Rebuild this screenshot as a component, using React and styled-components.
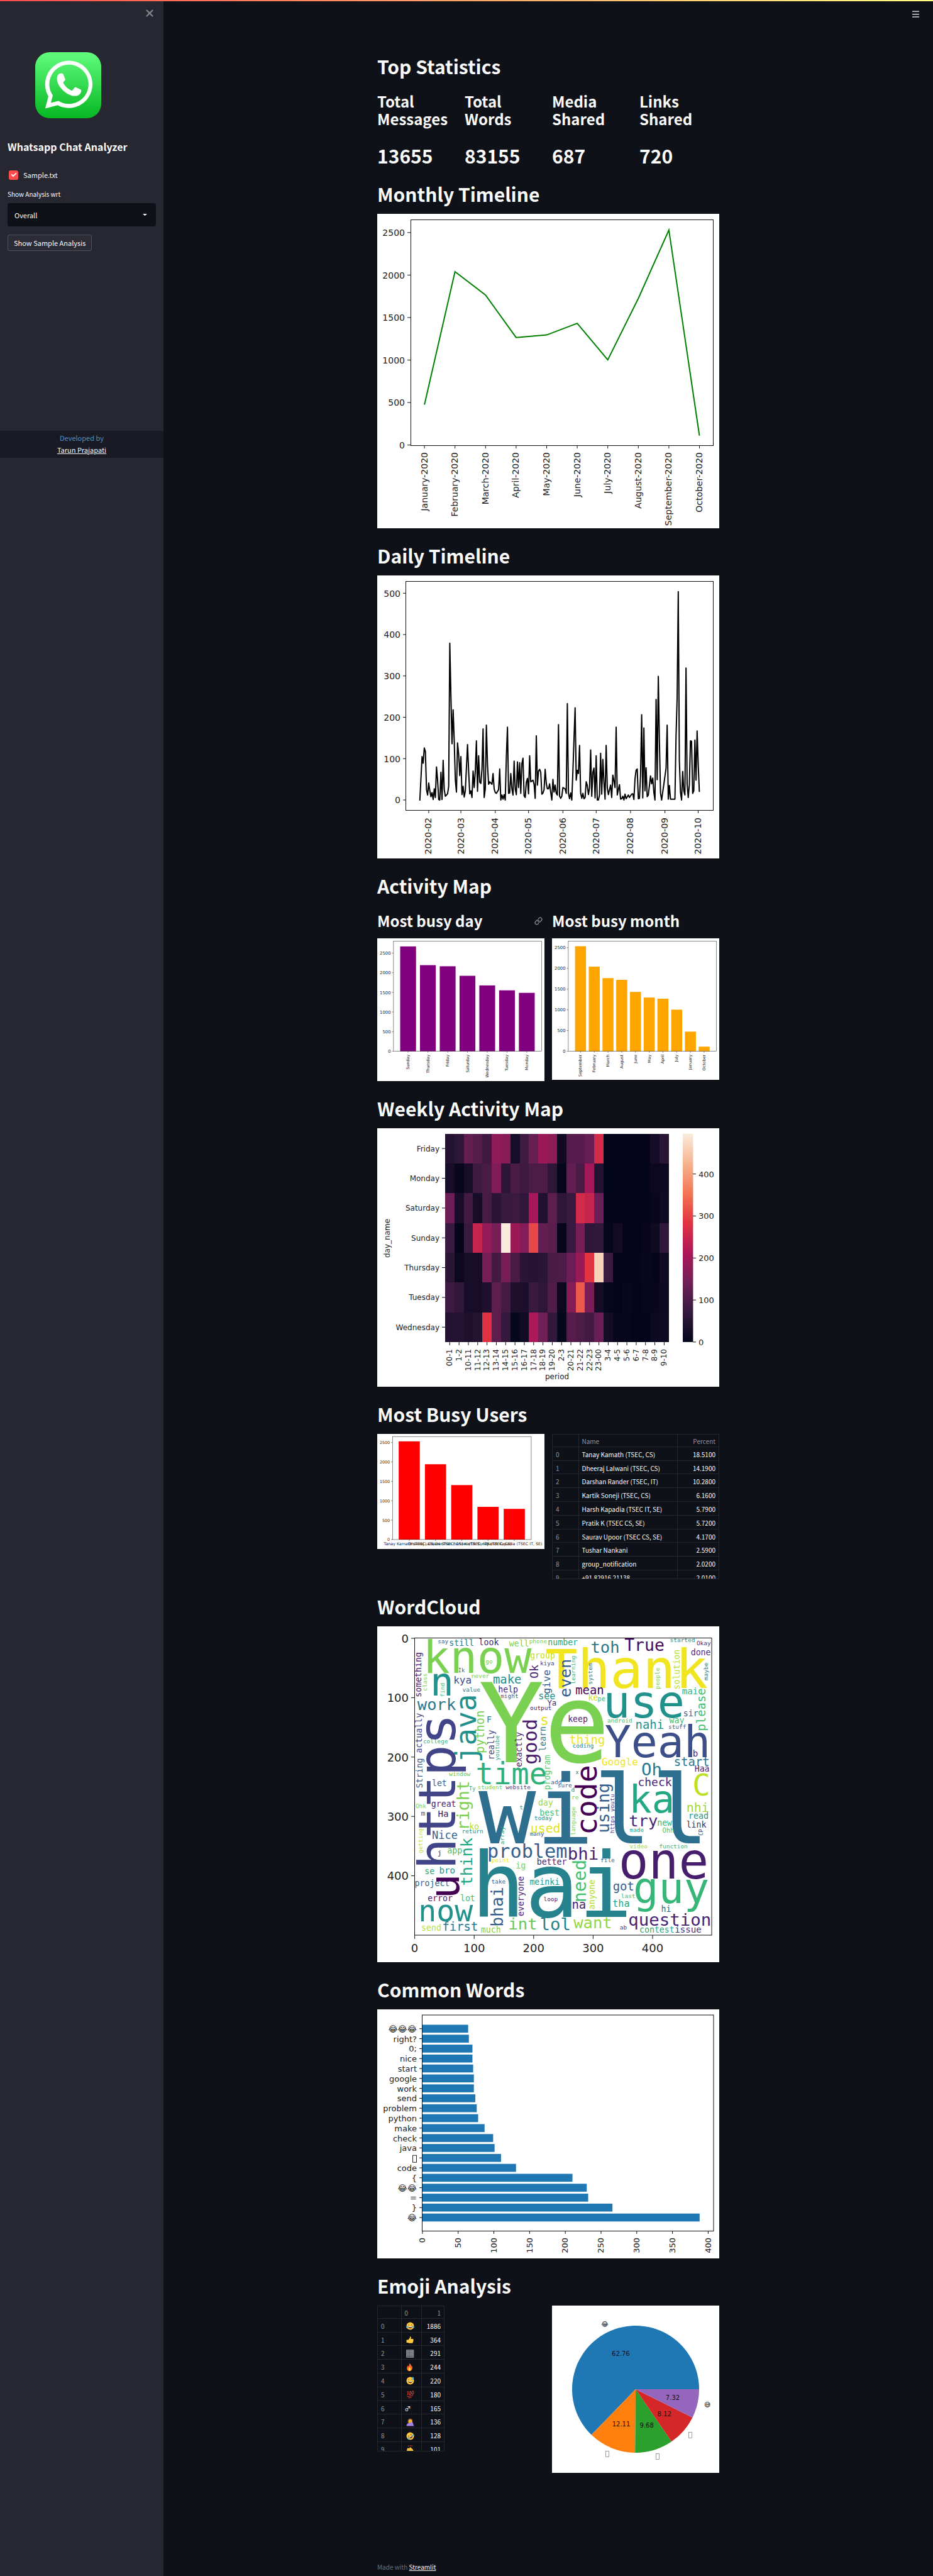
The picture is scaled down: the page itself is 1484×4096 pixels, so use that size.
import React from "react";
import styled, { createGlobalStyle } from "styled-components";
import { Link as LinkIcon, X, Menu } from "lucide-react";

const sans = `"Noto Sans CJK SC", "Open Sans", sans-serif`;
const plotFont = `"DejaVu Sans", sans-serif`;
const cloudFont = `"DejaVu Sans Mono", monospace`;

const GlobalStyle = createGlobalStyle`
  *, *::before, *::after { box-sizing: border-box; }
  body { margin: 0; background: #0e1117; color: #fafafa; font-family: ${sans}; font-size: 11px; line-height: 18px; }
  h1, h2, h3, p { margin: 0; }
  button, select, input { font: inherit; color: inherit; }
`;

/* ---------- page frame ---------- */

const Page = styled.div`
  display: flex;
  align-items: stretch;
  min-height: 100vh;
  position: relative;
`;

const TopStripe = styled.div`
  position: absolute;
  top: 0;
  left: 0;
  right: 0;
  height: 2px;
  background: linear-gradient(90deg, #ff4b4b, #fffd80);
`;

const Sidebar = styled.aside`
  flex: 0 0 260px;
  background: #262730;
  display: flex;
  flex-direction: column;
`;

const SidebarTop = styled.div`
  display: flex;
  justify-content: flex-end;
  padding: 12px 13px 0;
`;

const IconButton = styled.button`
  display: flex;
  padding: 0;
  border: 0;
  background: none;
  color: ${(p) => p.$color};
  cursor: pointer;
`;

const SidebarBody = styled.div`
  display: flex;
  flex-direction: column;
  align-items: flex-start;
  padding: 53px 12px 0;
`;

const Logo = styled.svg`
  width: 105px;
  height: 105px;
  margin-left: 44px;
`;

const SidebarTitle = styled.h2`
  margin-top: 32px;
  font-size: 16px;
  line-height: 26px;
  font-weight: 600;
`;

const CheckLabel = styled.label`
  display: flex;
  align-items: center;
  gap: 8px;
  margin: 23px 0 0 2px;
  height: 18px;
`;

const CheckBox = styled.input`
  appearance: none;
  width: 15px;
  height: 15px;
  margin: 0;
  border-radius: 3px;
  background: #ff4b4b
    url("data:image/svg+xml,%3Csvg xmlns='http://www.w3.org/2000/svg' viewBox='0 0 17 13'%3E%3Cpath fill='white' d='M6.5 12.1 .9 6.5 3 4.4l3.5 3.5L14 .9 16.1 3z'/%3E%3C/svg%3E")
    center / 10px 8px no-repeat;
`;

const FieldLabel = styled.label`
  margin: 13px 0 5px;
  font-size: 10px;
`;

const SelectWrap = styled.div`
  width: 100%;
  position: relative;
`;

const Select = styled.select`
  appearance: none;
  width: 100%;
  height: 37px;
  padding: 0 11px;
  border: 0;
  border-radius: 3px;
  background: #0e1117;
`;

const Caret = styled.svg`
  position: absolute;
  right: 14px;
  top: 16px;
  width: 7px;
  height: 5px;
  pointer-events: none;
`;

const Button = styled.button`
  margin-top: 13px;
  height: 26px;
  padding: 0 9px;
  border: 1px solid #50525b;
  border-radius: 3px;
  background: #2b2c36;
  line-height: 20px;
`;

const Credit = styled.div`
  margin-top: 286px;
  padding: 2px 0 3px;
  background: #191a24;
  text-align: center;
  line-height: 19px;
  color: #4f8fc6;
`;

const PlainLink = styled.a`
  color: #fafafa;
  text-decoration: underline;
`;

const Main = styled.main`
  flex: 1;
  min-width: 0;
  display: flex;
  flex-direction: column;
  align-items: center;
  padding: 0 12px;
`;

const MenuBar = styled.header`
  align-self: stretch;
  display: flex;
  justify-content: flex-end;
  height: 74px;
  padding: 15px 8px 0;
`;

const Content = styled.div`
  width: 100%;
  max-width: 544px;
  display: flex;
  flex-direction: column;
  gap: 12px;
`;

const Heading = styled.h1`
  padding: 14px 0 2px;
  font-size: 30px;
  line-height: 35px;
  font-weight: 700;
`;

const SubHeading = styled.h2`
  display: flex;
  align-items: center;
  justify-content: space-between;
  padding: 10px 3px 2px 0;
  font-size: 24px;
  line-height: 28px;
  font-weight: 600;
`;

const Columns = styled.div`
  display: grid;
  grid-template-columns: repeat(${(p) => p.$count}, minmax(0, 1fr));
  gap: 12px;
  align-items: start;
`;

const Stack = styled.div`
  display: flex;
  flex-direction: column;
  gap: 12px;
`;

const StatValue = styled.p`
  padding: 14px 0 2px;
  font-size: 30px;
  line-height: 32px;
  font-weight: 700;
`;

const Figure = styled.svg`
  display: block;
  width: 100%;
  height: auto;
  background: #fff;
  font-family: ${plotFont};
`;

const TableFrame = styled.div`
  width: ${(p) => p.$width || "100%"};
  height: ${(p) => p.$height};
  overflow: hidden;
  border: 1px solid #24272d;
`;

const DataTable = styled.table`
  width: 100%;
  height: 238px;
  border-collapse: collapse;
  table-layout: fixed;
  font-size: 10px;
  line-height: 16px;

  th, td {
    padding: 3px 5px 0;
    border-right: 1px solid #24272d;
    border-bottom: 1px solid #24272d;
    font-weight: 400;
    text-align: left;
    white-space: nowrap;
  }
  th { color: #909299; }
  th:last-child, td:last-child { text-align: right; border-right: 0; }
`;

const Emoji = styled.svg`
  display: block;
  width: 13px;
  height: 13px;
  margin-left: 2px;
`;

const PageFooter = styled.footer`
  margin-top: 128px;
  padding-bottom: 5px;
  font-size: 10px;
  line-height: 20px;
  color: #6c6e75;
`;

/* ---------- plots ---------- */

const INK = "#222";

function Frame({ x0, x1, y0, y1 }) {
  return <rect x={x0} y={y0} width={x1 - x0} height={y1 - y0} fill="none" stroke="#111" strokeWidth="1" />;
}

function YTicks({ ticks, x, y, size = 13, side = "left" }) {
  const dir = side === "left" ? -1 : 1;
  return ticks.map((t) => (
    <g key={t}>
      <line x1={x} x2={x + dir * 5} y1={y(t)} y2={y(t)} stroke="#111" />
      <text x={x + dir * 9} y={y(t) + size * 0.38} fontSize={size} fill={INK} textAnchor={side === "left" ? "end" : "start"}>
        {t}
      </text>
    </g>
  ));
}

function XTicks({ labels, x, y, size = 13, offset = 11 }) {
  return labels.map((t, i) => (
    <g key={t}>
      <line x1={x(i)} x2={x(i)} y1={y} y2={y + 5} stroke="#111" />
      <text transform={`translate(${x(i) + size * 0.32} ${y + offset}) rotate(-90)`} fontSize={size} fill={INK} textAnchor="end">
        {t}
      </text>
    </g>
  ));
}

const MONTHS = [
  ["January-2020", 475], ["February-2020", 2040], ["March-2020", 1765], ["April-2020", 1265], ["May-2020", 1295],
  ["June-2020", 1432], ["July-2020", 1003], ["August-2020", 1725], ["September-2020", 2530], ["October-2020", 110],
];

function MonthlyTimeline() {
  const x = (i) => 75.1 + i * 48.6;
  const y = (v) => 367.6 - v * 0.13512;
  return (
    <Figure viewBox="0 0 544 500" role="img" aria-label="Messages per month">
      <YTicks ticks={[0, 500, 1000, 1500, 2000, 2500]} x={53} y={y} size={14} />
      <XTicks labels={MONTHS.map((m) => m[0])} x={x} y={368} size={14} />
      <polyline fill="none" stroke="green" strokeWidth="2" points={MONTHS.map((m, i) => `${x(i)},${y(m[1])}`).join(" ")} />
      <Frame x0={53.5} x1={534.5} y0={9.5} y1={368.5} />
    </Figure>
  );
}

/* day number since 24 January, messages sent that day */
const DAILY = `0,0 2,105 3,89 4,126 5,117 6,25 7,12 8,41 9,22 10,8 11,18 12,1 13,27 14,6 15,80 16,48 17,1 18,0 19,67 20,1 21,96 22,25 23,9 25,15 26,33 27,379 28,253 29,136 30,218 31,143 32,48 33,19 34,138 35,111 36,59 37,105 38,13 39,33 40,7 41,22 43,134 44,69 45,15 46,22 47,6 48,70 49,30 50,69 51,143 52,21 53,107 54,43 55,40 56,74 57,172 58,6 59,27 60,181 61,85 62,38 63,44 65,38 66,64 67,27 68,18 69,16 71,25 72,75 73,0 74,12 75,2 76,13 77,0 78,105 79,176 80,16 81,17 82,64 83,27 84,12 85,94 86,27 87,13 88,92 89,30 90,90 91,16 92,88 93,101 94,10 95,6 96,43 97,52 98,15 99,107 100,44 102,48 103,38 104,4 105,155 106,36 107,70 108,74 109,67 110,14 111,17 112,25 113,74 114,40 115,27 116,27 117,39 118,19 119,0 120,50 121,19 122,36 123,16 124,12 125,182 126,9 127,4 128,9 129,30 131,27 132,16 133,233 134,16 135,3 136,17 137,0 138,69 139,148 140,223 141,48 142,72 143,64 144,132 145,17 146,4 147,16 148,3 149,6 150,44 151,35 152,13 153,29 154,121 155,9 156,67 157,77 158,5 159,107 160,0 161,0 162,12 163,113 164,14 165,98 166,43 167,2 168,132 169,30 170,13 172,36 173,6 174,60 175,46 176,30 177,176 178,12 179,25 180,37 181,2 182,3 183,9 184,0 185,14 186,3 188,12 189,6 191,14 192,15 193,1 194,51 195,72 196,75 197,3 198,4 199,59 200,206 201,5 202,174 203,22 204,78 205,8 206,12 208,58 209,39 210,53 211,19 212,0 213,243 214,49 215,299 216,143 217,17 218,0 220,38 222,77 223,181 224,2 225,35 226,2 230,2 231,153 232,247 233,504 234,95 235,19 236,0 237,69 238,22 239,12 240,319 241,38 242,6 243,38 244,143 245,142 246,16 247,22 248,145 249,48 250,167 251,85 252,21`
  .split(" ")
  .map((p) => p.split(",").map(Number));

const MONTH_STARTS = [8, 37, 68, 98, 129, 159, 190, 221, 251];

function DailyTimeline() {
  const x = (d) => 67.8 + d * 1.764;
  const y = (v) => 357 - v * 0.6574;
  return (
    <Figure viewBox="0 0 544 450" role="img" aria-label="Messages per day">
      <YTicks ticks={[0, 100, 200, 300, 400, 500]} x={46} y={y} size={14} />
      <XTicks
        labels={["02", "03", "04", "05", "06", "07", "08", "09", "10"].map((m) => `2020-${m}`)}
        x={(i) => x(MONTH_STARTS[i])}
        y={373}
        size={14}
        offset={12}
      />
      <polyline fill="none" stroke="#000" strokeWidth="2" strokeLinejoin="round" strokeLinecap="square" points={DAILY.map(([d, v]) => `${x(d)},${y(v)}`).join(" ")} />
      <Frame x0={45.5} x1={534.5} y0={9.5} y1={373.5} />
    </Figure>
  );
}

function BarPlot({ height, data, color, first, step, unit, label }) {
  const x = (i) => first + i * step;
  const y = (v) => 367.3 - v * unit;
  return (
    <Figure viewBox={`0 0 544 ${height}`} role="img" aria-label={label}>
      <YTicks ticks={[0, 500, 1000, 1500, 2000, 2500]} x={53} y={y} size={14} />
      <XTicks labels={data.map((d) => d[0])} x={x} y={367} />
      {data.map(([name, v], i) => (
        <rect key={name} x={x(i) - step * 0.4} width={step * 0.8} y={y(v)} height={v * unit} fill={color} />
      ))}
      <Frame x0={53} x1={535} y0={9} y1={367.3} />
    </Figure>
  );
}

const BUSY_DAYS = [["Sunday", 2670], ["Thursday", 2193], ["Friday", 2165], ["Saturday", 1922], ["Wednesday", 1677], ["Tuesday", 1552], ["Monday", 1488]];
const BUSY_MONTHS = [["September", 2535], ["February", 2043], ["March", 1766], ["August", 1724], ["June", 1433], ["May", 1297], ["April", 1268], ["July", 1004], ["January", 474], ["October", 112]];

const HEAT_DAYS = ["Friday", "Monday", "Saturday", "Sunday", "Thursday", "Tuesday", "Wednesday"];
const HEAT_PERIODS = ["00-1", "1-2", "10-11", "11-12", "12-13", "13-14", "14-15", "15-16", "16-17", "17-18", "18-19", "19-20", "2-3", "20-21", "21-22", "22-23", "23-00", "3-4", "4-5", "5-6", "6-7", "7-8", "8-9", "9-10"];
const HEAT = [
  [45, 60, 125, 110, 82, 178, 170, 30, 85, 130, 190, 175, 18, 110, 112, 130, 262, 1, 1, 1, 1, 3, 25, 55],
  [30, 8, 30, 82, 95, 160, 58, 95, 82, 100, 100, 60, 5, 125, 95, 200, 45, 2, 1, 1, 1, 2, 12, 15],
  [135, 28, 88, 28, 92, 55, 75, 78, 65, 205, 42, 120, 60, 75, 262, 245, 135, 3, 1, 1, 1, 2, 8, 18],
  [75, 3, 75, 245, 185, 150, 496, 190, 165, 305, 125, 115, 5, 75, 150, 60, 68, 5, 22, 1, 1, 5, 18, 65],
  [55, 12, 30, 30, 150, 88, 150, 92, 55, 50, 55, 95, 100, 135, 190, 285, 465, 78, 1, 1, 1, 6, 3, 18],
  [80, 65, 30, 30, 40, 118, 90, 38, 35, 75, 60, 105, 12, 165, 325, 155, 25, 4, 1, 7, 1, 4, 8, 14],
  [45, 48, 40, 48, 280, 120, 70, 6, 20, 215, 140, 68, 6, 110, 98, 88, 135, 25, 5, 4, 1, 1, 15, 17],
];
const ROCKET = [[3, 5, 26], [53, 25, 62], [112, 31, 87], [173, 23, 89], [225, 51, 66], [243, 118, 81], [246, 180, 143], [250, 235, 221]];

function rocket(v) {
  const t = (Math.min(v, 496) / 496) * 7;
  const i = Math.min(6, Math.floor(t));
  const c = ROCKET[i].map((a, k) => Math.round(a + (ROCKET[i + 1][k] - a) * (t - i)));
  return `rgb(${c.join(",")})`;
}

function WeeklyHeatmap() {
  const cw = 14.83;
  const rh = 47.35;
  const y = (v) => 339.9 - v * 0.668;
  return (
    <Figure viewBox="0 0 544 411" role="img" aria-label="Messages by weekday and hour">
      <defs>
        <linearGradient id="rocket" x1="0" y1="1" x2="0" y2="0">
          {ROCKET.map((c, i) => (
            <stop key={i} offset={i / 7} stopColor={`rgb(${c.join(",")})`} />
          ))}
        </linearGradient>
      </defs>
      <g shapeRendering="crispEdges">
        {HEAT.map((row, r) => row.map((v, c) => <rect key={`${r}-${c}`} x={107.9 + c * cw} y={8.5 + r * rh} width={cw + 0.3} height={rh + 0.3} fill={rocket(v)} />))}
      </g>
      {HEAT_DAYS.map((d, i) => (
        <g key={d}>
          <line x1={103} x2={108} y1={8.5 + (i + 0.5) * rh} y2={8.5 + (i + 0.5) * rh} stroke="#111" />
          <text x={99} y={8.5 + (i + 0.5) * rh + 4.5} fontSize="12" fill={INK} textAnchor="end">{d}</text>
        </g>
      ))}
      <XTicks labels={HEAT_PERIODS} x={(i) => 107.9 + (i + 0.5) * cw} y={340} size={12} />
      <text transform="translate(20 175) rotate(-90)" fontSize="12" fill={INK} textAnchor="middle">day_name</text>
      <text x="286" y="399" fontSize="12" fill={INK} textAnchor="middle">period</text>
      <rect x="486" y="8.5" width="16.4" height="331.4" fill="url(#rocket)" />
      <YTicks ticks={[0, 100, 200, 300, 400]} x={502} y={y} side="right" />
    </Figure>
  );
}

const TOP_USERS = [["Tanay Kamath (TSEC, CS)", 2530], ["Dheeraj Lalwani (TSEC, CS)", 1940], ["Darshan Rander (TSEC, IT)", 1403], ["Kartik Soneji (TSEC, CS)", 843], ["Harsh Kapadia (TSEC IT, SE)", 790]];

function BusyUsersPlot() {
  const x = (i) => 104.2 + i * 85.4;
  const y = (v) => 343.5 - v * 0.1262;
  return (
    <Figure viewBox="0 0 544 374" role="img" aria-label="Messages per user">
      <YTicks ticks={[0, 500, 1000, 1500, 2000, 2500]} x={50} y={y} />
      {TOP_USERS.map(([name, v], i) => (
        <g key={name}>
          <line x1={x(i)} x2={x(i)} y1="343" y2="348" stroke="#111" />
          <rect x={x(i) - 34.4} width="68.8" y={y(v)} height={v * 0.1262} fill="red" />
          <text x={x(i)} y="363" fontSize="13" fill={INK} textAnchor="middle">{name}</text>
        </g>
      ))}
      <Frame x0={50} x1={501} y0={8.5} y1={343.5} />
    </Figure>
  );
}

/* text, start, end, baseline, colour step */
const CLOUD_ACROSS = `know 243 684 343 8|Thank 748 1437 405 10|Ye 467 992 712 8|will 467 1415 1048 3.6|hai 465 1095 1352 4.4|use 1008 1328 528 5|Yeah 1000 1437 692 2.4|one 1070 1427 1194 .8|guy 1130 1439 1295 6.6|time 458 745 804 6.4|n 272 348 438 5|say 291 335 222 3|still 340 442 232 4|look 467 547 229 1|well 593 675 233 8|phone 680 753 220 8|number 760 884 230 6|toh 943 1058 260 4|True 1083 1250 252 .3|started 1277 1380 217 5|Okay 1390 1448 229 1.4|done 1366 1447 270 1.4|group 684 787 283 9|kiya 726 784 311 2|go 494 522 305 8|Ik 378 405 341 3|kya 360 430 388 2.5|never 435 508 365 8|make 527 643 388 5|value 395 468 421 4|help 549 631 424 1|might 558 632 448 3|see 719 789 453 5|mean 877 995 432 .2|ke 931 968 459 9.4|pe 971 1000 461 7|mai 1329 1391 432 6.5|Ya 755 791 479 1|output 683 771 498 .6|work 204 370 498 4|F 500 516 550 4|s 728 758 558 9.8|keep 845 927 546 1|android 1011 1114 548 7|nahi 1133 1249 576 5|way 1273 1336 551 7|sir 1334 1392 524 3|stuff 1270 1342 574 3|college 229 332 634 6.5|thing 851 999 636 10|coding 863 951 653 4.5|b 1375 1392 690 1|Google 988 1140 725 10|start 1295 1439 728 4|Oh 1158 1238 768 4|Haa 1382 1443 752 1|window 338 429 771 7.5|let 268 326 811 3|x 875 888 761 4|add 772 814 805 3|sure 800 857 818 3|d 858 870 836 5|re 860 888 866 8|student 460 563 824 8|website 578 684 824 2|check 1142 1287 811 1|ka 1115 1287 921 6|C 1378 1439 850 9|Ty 423 451 830 6|great 264 367 898 1|Ohk 197 241 902 8|Ha 293 333 940 .5|m 220 234 934 3|ko 426 463 990 9|return 394 484 1007 5|day 718 779 891 8.6|best 725 806 934 7|t 638 650 909 6|today 701 774 951 5|used 688 806 1004 9.7|many 682 742 1017 3|try 1105 1222 978 1|new 1224 1286 976 6.6|made 1106 1166 1002 6|Ohh 1245 1290 1004 7|nhi 1350 1436 918 8.6|read 1357 1439 948 5|link 1348 1429 983 1.2|Nice 268 369 1029 3|app 332 393 1089 7|j 290 305 1098 1|problem 507 840 1107 3|bhi 847 970 1117 1|point 520 593 1126 10|better 713 836 1136 1|ig 624 661 1152 8|file 982 1040 1126 3|video 1105 1178 1068 8.5|function 1231 1350 1068 6.5|se 236 274 1175 6|bro 299 361 1172 5|project 195 340 1226 3|take 519 577 1216 3|meinki 682 804 1221 5.6|loop 741 800 1288 1|got 1036 1119 1243 3|last 1070 1126 1275 7|tha 1034 1104 1312 6|hi 1241 1279 1332 3|error 249 352 1288 1|lot 388 447 1287 7|now 218 437 1372 5|send 222 302 1410 9|first 312 455 1411 4|much 475 557 1418 8|int 595 710 1405 7.6|lol 729 850 1407 4.4|na 863 917 1320 1|want 867 1028 1400 8.4|ab 1064 1092 1405 2|question 1103 1445 1390 1|contest 1148 1293 1417 6|issue 1299 1404 1417 1.4`;
const CLOUD_UP = `something 442 261 221 1|class 417 346 245 8|find 442 386 318 7|java 708 437 453 5|Ok 363 310 716 1|give 428 333 767 3|even 441 288 855 3|learning 388 273 874 6.6|system 390 305 945 4|people 408 323 1231 8|solution 410 248 1317 9|maybe 373 300 1436 4|please 580 408 1425 7|actually 673 512 222 2|https 1138 528 363 2|python 672 502 486 8|really 700 580 530 2|youtube 705 602 552 6|exactly 731 590 648 1|good 718 537 711 .7|learn 665 565 747 4|program 825 685 766 7.5|String 818 698 224 3|right 990 790 422 8|code 1007 730 964 0|using 1000 800 1018 3|https_youtu 1005 842 1040 1.5|language 1013 897 874 8|array 1052 980 572 6|getting 1088 985 224 9|think 1220 1024 436 6|CP 1015 990 1416 2|need 1287 1120 918 7|anyone 1320 1197 957 8.8|bhai 1388 1232 568 3|everyone 1348 1185 655 1|u 1264 1185 381 0`;
const VIRIDIS = [[68, 1, 84], [72, 36, 117], [65, 68, 135], [53, 95, 141], [42, 120, 142], [33, 145, 140], [34, 168, 132], [68, 191, 112], [122, 209, 81], [189, 223, 38], [240, 229, 30]];

function viridis(t) {
  const i = Math.min(9, Math.floor(t));
  const c = VIRIDIS[i].map((a, k) => Math.round(a + (VIRIDIS[i + 1][k] - a) * (t - i)));
  return `rgb(${c.join(",")})`;
}

const bearing = (ch, wide) => ("wvyYTWx".includes(ch) ? 0.01 : ch === "k" && !wide ? 0 : "hnlbpkruiF".includes(ch) && wide ? 0.085 : 0.06);
const SX = 2.522;
const SY = 2.458;

function parseCloud(src, up) {
  return src.split("|").map((w) => {
    const [raw, a, b, base, tone] = w.split(" ");
    const text = raw.replace("_", " ");
    const [s, e, l] = [a, b, base].map(Number);
    const left = bearing(text[0], true);
    const em = text.length * 0.602 - left - bearing(text[text.length - 1], false);
    const size = Math.round((up ? (s - e) / SY : (e - s) / SX) / em);
    const x = up ? (l - 192) / SX : (s - 192) / SX - left * size;
    const y = up ? (s - 199) / SY + left * size : (l - 199) / SY;
    return { text, size, x, y, up, fill: viridis(Number(tone)) };
  });
}

const CLOUD = [...parseCloud(CLOUD_ACROSS, false), ...parseCloud(CLOUD_UP, true)];

const CloudWords = styled.g`
  font-family: ${cloudFont};
`;

function WordCloud() {
  const steps = [0, 100, 200, 300, 400];
  return (
    <Figure viewBox="0 0 544 534" role="img" aria-label="Word cloud">
      <CloudWords transform="translate(59.6 18.5) scale(0.945)">
        {CLOUD.map((w, i) => (
          <text key={i} transform={`translate(${w.x} ${w.y})${w.up ? " rotate(-90)" : ""}`} fontSize={w.size} fill={w.fill}>
            {w.text}
          </text>
        ))}
      </CloudWords>
      <Frame x0={59.5} x1={532} y0={18.5} y1={491} />
      <YTicks ticks={steps} x={59} y={(v) => 19 + v * 0.944} size={18} />
      {steps.map((v) => (
        <g key={v}>
          <line x1={59.6 + v * 0.946} x2={59.6 + v * 0.946} y1="491" y2="497" stroke="#111" />
          <text x={59.6 + v * 0.946} y="518" fontSize="18" fill={INK} textAnchor="middle">{v}</text>
        </g>
      ))}
    </Figure>
  );
}

const COMMON = [["😂😂😂", 64], ["right?", 65], ["0;", 70], ["nice", 70], ["start", 71], ["google", 72], ["work", 72], ["send", 74], ["problem", 76], ["python", 78], ["make", 87], ["check", 99], ["java", 101], [null, 110], ["code", 131], ["{", 210], ["😂😂", 230], ["=", 232], ["}", 266], ["😂", 388]];

function CommonWords() {
  const x = (v) => 71.9 + v * 1.1363;
  const y = (i) => 30.8 + i * 15.8;
  return (
    <Figure viewBox="0 0 544 396" role="img" aria-label="Most common words">
      {COMMON.map(([word, v], i) => (
        <g key={i}>
          <line x1="67" x2="72" y1={y(i)} y2={y(i)} stroke="#111" />
          <rect x={x(0)} y={y(i) - 6.3} width={v * 1.1363} height="12.6" fill="#1f77b4" />
          {word ? (
            <text x="63" y={y(i) + 5} fontSize="13" fill={INK} textAnchor="end">{word}</text>
          ) : (
            <rect x="56.5" y={y(i) - 4} width="6" height="11" fill="none" stroke={INK} />
          )}
        </g>
      ))}
      <XTicks labels={[0, 50, 100, 150, 200, 250, 300, 350, 400]} x={(i) => x(i * 50)} y={352} />
      <Frame x0={71.5} x1={535} y0={9} y1={352.5} />
    </Figure>
  );
}

const SLICES = [[62.76, "#1f77b4"], [12.11, "#ff7f0e"], [9.68, "#2ca02c"], [8.12, "#d62728"], [7.32, "#9467bd"]];

function EmojiPie() {
  const cx = 133;
  const r = 101;
  const at = (pct, k) => {
    const a = (pct / 100) * 2 * Math.PI;
    return [cx + Math.cos(a) * r * k, cx - Math.sin(a) * r * k];
  };
  let run = 0;
  return (
    <Figure viewBox="0 0 266 266" role="img" aria-label="Share of the five most used emoji">
      {SLICES.map(([pct, color]) => {
        const from = at(run, 1);
        const mid = at(run + pct / 2, 0.6);
        run += pct;
        const to = at(run, 1);
        return (
          <g key={pct}>
            <path d={`M${cx} ${cx}L${from}A${r} ${r} 0 ${pct > 50 ? 1 : 0} 0 ${to}Z`} fill={color} />
            <text x={mid[0]} y={mid[1] + 3} fontSize="10" fill="#111" textAnchor="middle">{pct}</text>
          </g>
        );
      })}
      <text x="84" y="33" fontSize="10" fill={INK} textAnchor="middle">😂</text>
      <text x="247" y="161" fontSize="10" fill={INK} textAnchor="middle">😅</text>
      {[[88, 236], [168, 240], [220, 206]].map(([x, y]) => (
        <rect key={x} x={x - 2.5} y={y - 4.5} width="5" height="9" fill="none" stroke="#777" strokeWidth="0.7" />
      ))}
    </Figure>
  );
}

/* ---------- emoji ---------- */

const Face = () => <circle cx="12" cy="12" r="11" fill="#ffc83d" />;
const Grin = () => (
  <>
    <path d="M6 10q1.7-3 3.6 0M14.4 10q1.8-3 3.6 0" fill="none" stroke="#422b0d" strokeWidth="1.3" />
    <path d="M6 13h12q-.8 6-6 6t-6-6z" fill="#422b0d" />
    <path d="M7 13h10l-.6 2H7.6z" fill="#fff" />
    <path d="M9 18q3-2 6 0-3 2-6 0z" fill="#e0402f" />
  </>
);

const EMOJI = {
  joy: (<><Face /><Grin /><path d="M0 16q0-4 5-4 0 6-3 6-2 0-2-2zM24 16q0-4-5-4 0 6 3 6 2 0 2-2z" fill="#3fb8ef" /></>),
  thumb: (<path d="M1 12h5l5-6V2.500q3-1.500 3.500 2.500L14 9h6q2.500 1 1 3 1.500 2-.2 3.200.8 2-.8 2.800.4 2.500-2 3.500H9q-2 0-3-1H1z" fill="#ffc83d" />),
  grid: (<path d="M1 1h21v22H1zM1 4h21M1 7h21M1 10h21M1 13h21M1 16h21M1 19h21M4 1v22M8 1v22M12 1v22M16 1v22M19 1v22" fill="none" stroke="#cfd0d3" strokeWidth="1.100" />),
  fire: (<><path d="M9 0q8 5 7 10l1.500-3q4 13-7.500 16Q2 22 2 14q0-5 3-8 1 3 2 3 3-4 2-9z" fill="#ff6723" /><path d="M10 11q5 5 3.500 9-3 4-7 0-1.500-4 3.500-9z" fill="#ffd43b" /></>),
  sweat: (<><Face /><Grin /><path d="M20 0q5 6 1 9-4 0-4-4z" fill="#3fb8ef" /></>),
  hundred: (<g fill="none" stroke="#e0402f" strokeWidth="1.800"><path d="M3 5l3-3-2 12" /><ellipse cx="11.500" cy="7.500" rx="2.600" ry="5" transform="rotate(12 11.500 7.500)" /><ellipse cx="19.500" cy="6.500" rx="2.600" ry="5" transform="rotate(12 19.500 6.500)" /><path d="M3 18l17-3M6 22l10-2" /></g>),
  palm: (<><path d="M5 12V7q1-6 8-6 6 1 6 7v8H5z" fill="#8b4f2b" /><circle cx="12" cy="9" r="5" fill="#ffc83d" /><path d="M9 5l7 4-4 8-4-3z" fill="#f2a92a" /><path d="M1 23q0-8 10-9l7-4 5 13z" fill="#a583e8" /></>),
  rofl: (<g transform="rotate(-35 12 12)"><Face /><Grin /><path d="M1 16q0-4 5-4 0 6-3 6-2 0-2-2zM23 16q0-4-5-4 0 6 3 6 2 0 2-2z" fill="#3fb8ef" /></g>),
  clap: (<><path d="M3 10l3-2 3 2 2-4 3 1 6 6 2 6-4 5H9l-7-8z" fill="#ffc83d" /><path d="M8 10l6 8M11 8l6 8M5 13l5 6" stroke="#d9971c" strokeWidth="1" /><path d="M6 1l1 3M12 0v3M18 1l-2 3" stroke="#e0402f" strokeWidth="2" /></>),
};

const EMOJI_ROWS = [["joy", 1886], ["thumb", 364], ["grid", 291], ["fire", 244], ["sweat", 220], ["hundred", 180], [null, 165], ["palm", 136], ["rofl", 128], ["clap", 101]];
const USER_ROWS = [
  ["Tanay Kamath (TSEC, CS)", "18.5100"], ["Dheeraj Lalwani (TSEC, CS)", "14.1900"], ["Darshan Rander (TSEC, IT)", "10.2800"],
  ["Kartik Soneji (TSEC, CS)", "6.1600"], ["Harsh Kapadia (TSEC IT, SE)", "5.7900"], ["Pratik K (TSEC CS, SE)", "5.7200"],
  ["Saurav Upoor (TSEC CS, SE)", "4.1700"], ["Tushar Nankani", "2.5900"], ["group_notification", "2.0200"], ["+91 82916 21138", "2.0100"],
];

const STATS = [["Total Messages", 13655], ["Total Words", 83155], ["Media Shared", 687], ["Links Shared", 720]];

function WhatsAppLogo() {
  return (
    <Logo viewBox="0 0 105 105" role="img" aria-label="WhatsApp">
      <defs>
        <linearGradient id="wa" gradientUnits="userSpaceOnUse" x1="0" y1="0" x2="0" y2="105">
          <stop offset="0" stopColor="#61fd7d" />
          <stop offset="1" stopColor="#06b722" />
        </linearGradient>
      </defs>
      <rect width="105" height="105" rx="23" fill="url(#wa)" />
      <path d="M15.900 89.600 21 70.200A37.600 37.600 0 1 1 35.700 84.300z" fill="#fff" />
      <path d="M24.900 80.600 28 68.800A31.200 31.200 0 1 1 37 77.400z" fill="url(#wa)" />
      <path d="M41.600 33.600C36.500 33.600 34.600 38 34.600 42.500 34.600 54 50 69.600 63 69.600 69.500 69.600 73.200 66 73.200 60.800Q73.200 59.800 72 59.200L64.500 55.700Q63.500 55.200 62.700 56.200L59.500 60.300Q58.800 61.300 57.500 60.800C52 58.500 47 53.500 44.600 48.800Q44.300 48 45 47.200L47.500 44.500Q48.100 43.800 47.700 42.800L44.800 35.300Q44 33.600 41.600 33.600Z" fill="#fff" />
    </Logo>
  );
}

export default function App() {
  return (
    <>
      <GlobalStyle />
      <Page>
        <TopStripe />
        <Sidebar>
          <SidebarTop>
            <IconButton $color="#84858b" aria-label="Close sidebar"><X size={18} strokeWidth={3} /></IconButton>
          </SidebarTop>
          <SidebarBody>
            <WhatsAppLogo />
            <SidebarTitle>Whatsapp Chat Analyzer</SidebarTitle>
            <CheckLabel>
              <CheckBox type="checkbox" defaultChecked />
              Sample.txt
            </CheckLabel>
            <FieldLabel htmlFor="who">Show Analysis wrt</FieldLabel>
            <SelectWrap>
              <Select id="who" defaultValue="Overall">
                <option>Overall</option>
              </Select>
              <Caret viewBox="0 0 7 5"><path d="M0 1h7L3.500 4z" fill="#fafafa" /></Caret>
            </SelectWrap>
            <Button type="button">Show Sample Analysis</Button>
          </SidebarBody>
          <Credit>
            <p>Developed by</p>
            <PlainLink href="#author">Tarun Prajapati</PlainLink>
          </Credit>
        </Sidebar>

        <Main>
          <MenuBar>
            <IconButton $color="#fafafa" aria-label="Menu"><Menu size={15} strokeWidth={2} /></IconButton>
          </MenuBar>
          <Content>
            <Heading>Top Statistics</Heading>
            <Columns $count={4}>
              {STATS.map(([name, value]) => (
                <Stack key={name}>
                  <SubHeading>{name.split(" ")[0]}<br />{name.split(" ")[1]}</SubHeading>
                  <StatValue>{value}</StatValue>
                </Stack>
              ))}
            </Columns>

            <Heading>Monthly Timeline</Heading>
            <MonthlyTimeline />

            <Heading>Daily Timeline</Heading>
            <DailyTimeline />

            <Heading>Activity Map</Heading>
            <Columns $count={2}>
              <Stack>
                <SubHeading>
                  Most busy day
                  <LinkIcon size={13} color="#a3a5aa" />
                </SubHeading>
                <BarPlot height={464} data={BUSY_DAYS} color="purple" first={100.4} step={64.36} unit={0.1277} label="Most busy day" />
              </Stack>
              <Stack>
                <SubHeading>Most busy month</SubHeading>
                <BarPlot height={461} data={BUSY_MONTHS} color="orange" first={92.8} step={44.68} unit={0.13475} label="Most busy month" />
              </Stack>
            </Columns>

            <Heading>Weekly Activity Map</Heading>
            <WeeklyHeatmap />

            <Heading>Most Busy Users</Heading>
            <Columns $count={2}>
              <BusyUsersPlot />
              <TableFrame $height="231px">
                <DataTable>
                  <colgroup><col width="41" /><col /><col width="66" /></colgroup>
                  <thead><tr><th /><th>Name</th><th>Percent</th></tr></thead>
                  <tbody>
                    {USER_ROWS.map(([name, pct], i) => (
                      <tr key={name}><th>{i}</th><td>{name}</td><td>{pct}</td></tr>
                    ))}
                  </tbody>
                </DataTable>
              </TableFrame>
            </Columns>

            <Heading>WordCloud</Heading>
            <WordCloud />

            <Heading>Common Words</Heading>
            <CommonWords />

            <Heading>Emoji Analysis</Heading>
            <Columns $count={2}>
              <TableFrame $width="107px" $height="232px">
                <DataTable>
                  <colgroup><col width="37" /><col width="32" /><col /></colgroup>
                  <thead><tr><th /><th>0</th><th>1</th></tr></thead>
                  <tbody>
                    {EMOJI_ROWS.map(([name, count], i) => (
                      <tr key={count}>
                        <th>{i}</th>
                        <td>{name ? <Emoji viewBox="0 0 24 24" role="img" aria-label={name}>{EMOJI[name]}</Emoji> : "♂"}</td>
                        <td>{count}</td>
                      </tr>
                    ))}
                  </tbody>
                </DataTable>
              </TableFrame>
              <EmojiPie />
            </Columns>
            <PageFooter>
              Made with <PlainLink href="#streamlit">Streamlit</PlainLink>
            </PageFooter>
          </Content>
        </Main>
      </Page>
    </>
  );
}
